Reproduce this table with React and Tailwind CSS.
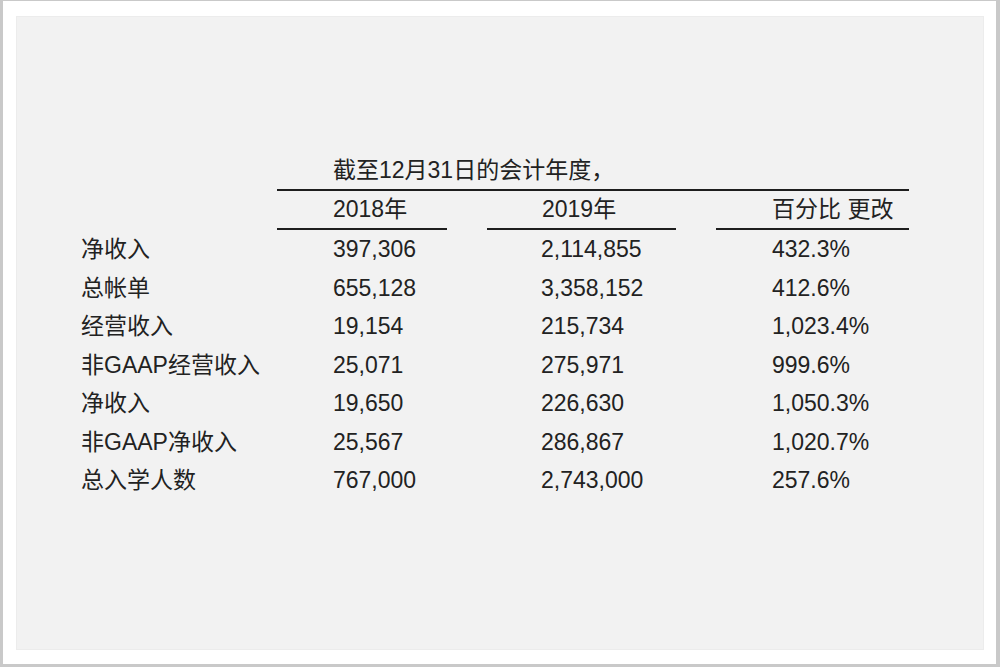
import React from 'react';

const rows = [
  ['净收入', '397,306', '2,114,855', '432.3%'],
  ['总帐单', '655,128', '3,358,152', '412.6%'],
  ['经营收入', '19,154', '215,734', '1,023.4%'],
  ['非GAAP经营收入', '25,071', '275,971', '999.6%'],
  ['净收入', '19,650', '226,630', '1,050.3%'],
  ['非GAAP净收入', '25,567', '286,867', '1,020.7%'],
  ['总入学人数', '767,000', '2,743,000', '257.6%'],
];

const font = { fontFamily: '"Liberation Sans", Arial, "Noto Sans CJK SC", sans-serif' };

const App = () => {
  return (
    <div
      className="w-[1000px] h-[667px] bg-white border-l-[3px] border-r-[4px] border-b-[3px] border-t border-[#c9c9c9] pt-[15px] pl-[13px] pr-[12px] pb-[14px]"
      style={font}
    >
      <div className="w-full h-full bg-[#f2f2f2] border border-[#ececec] pt-[134px] pl-[63px] text-[23px] text-[#222]">
        {/* title */}
        <div className="flex">
          <div className="w-[197px]" />
          <div className="w-[632px]">
            <div className="h-[38px] leading-[38px] pl-[56px]">截至12月31日的会计年度，</div>
            <div className="h-[2px] bg-[#1e1e1e]" />
          </div>
        </div>

        {/* header */}
        <div className="flex">
          <div className="w-[197px]" />
          <div className="w-[170px]">
            <div className="h-[37px] leading-[37px] pl-[56px]">2018年</div>
            <div className="h-[2px] bg-[#1e1e1e]" />
          </div>
          <div className="w-[40px]" />
          <div className="w-[189px]">
            <div className="h-[37px] leading-[37px] pl-[55px]">2019年</div>
            <div className="h-[2px] bg-[#1e1e1e]" />
          </div>
          <div className="w-[40px]" />
          <div className="w-[193px]">
            <div className="h-[37px] leading-[37px] pl-[56px]">百分比 更改</div>
            <div className="h-[2px] bg-[#1e1e1e]" />
          </div>
        </div>

        {/* body */}
        {rows.map((r, i) => (
          <div key={i} className="flex h-[38.5px] leading-[38.5px]">
            <div className="w-[197px] pl-[1px] whitespace-nowrap">{r[0]}</div>
            <div className="w-[170px] pl-[56px]">{r[1]}</div>
            <div className="w-[40px]" />
            <div className="w-[189px] pl-[54px]">{r[2]}</div>
            <div className="w-[40px]" />
            <div className="w-[193px] pl-[56px]">{r[3]}</div>
          </div>
        ))}
      </div>
    </div>
  );
};

export default App;
